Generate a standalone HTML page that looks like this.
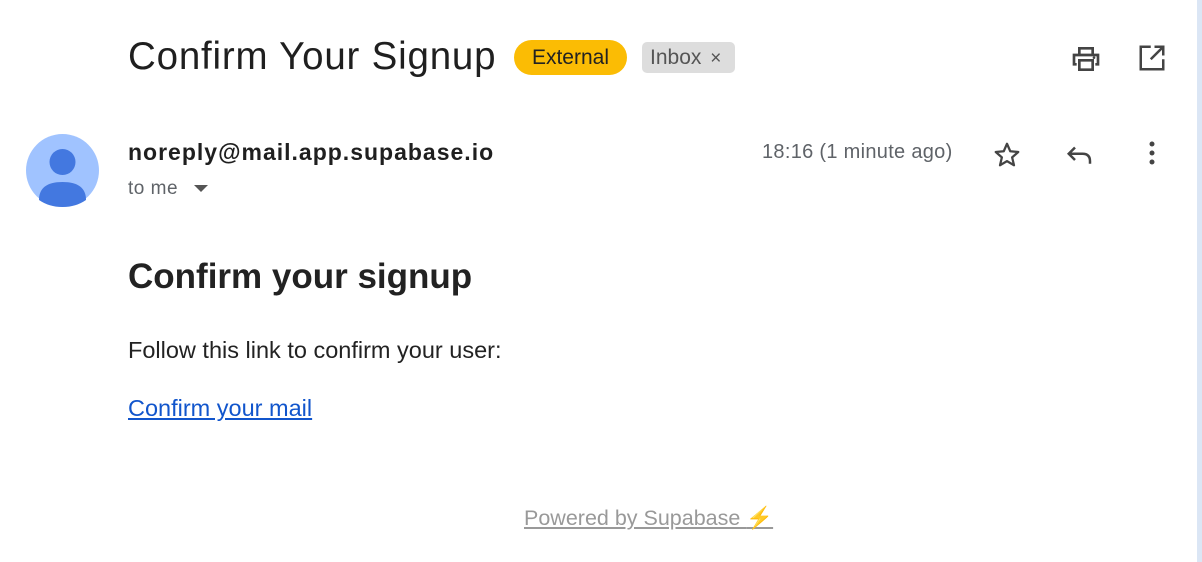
<!DOCTYPE html>
<html><head><meta charset="utf-8"><style>
body{margin:0;width:1202px;height:562px;background:#fff;font-family:"Liberation Sans",Arial,sans-serif;position:relative;overflow:hidden}
.a{position:absolute;white-space:nowrap}
</style></head><body>
<div class="a" style="left:1197px;top:0;width:5px;height:562px;background:#dbe6f5"></div>
<div class="a" style="left:128px;top:35px;font-size:38.5px;color:#1f1f1f;letter-spacing:0.8px">Confirm Your Signup</div>
<div class="a" style="left:514px;top:40px;width:113px;height:35px;border-radius:18px;background:#fbbc04;font-size:21px;color:#222;line-height:35px;text-align:center">External</div>
<div class="a" style="left:642px;top:42px;width:93px;height:31px;border-radius:5px;background:#dddddd;font-size:21px;color:#555;line-height:31px;padding-left:8px;box-sizing:border-box">Inbox <span style="font-size:19px;margin-left:3px">×</span></div>
<svg class="a" style="left:1070px;top:43px" width="32" height="32" viewBox="0 0 24 24"><path d="M7 8V4h10v4M5 16H3V9h18v7h-2M7 13h10v7H7z" fill="none" stroke="#444" stroke-width="2"/><circle cx="18" cy="11" r="1" fill="#444"/></svg>
<svg class="a" style="left:1137px;top:43px" width="30" height="30" viewBox="0 0 24 24"><path d="M11 3H3v18h18v-8M14 3h7v7M21 3L11 13" fill="none" stroke="#444" stroke-width="2"/></svg>
<svg class="a" style="left:26px;top:134px" width="73" height="73" viewBox="0 0 73 73"><circle cx="36.5" cy="36.5" r="36.5" fill="#a0c3ff"/><circle cx="36.5" cy="28" r="13" fill="#4378e0"/><path d="M13 66 Q13 48 36.5 48 Q60 48 60 66 Q50 73 36.5 73 Q23 73 13 66Z" fill="#4378e0"/></svg>
<div class="a" style="left:128px;top:139px;font-size:23px;font-weight:bold;color:#1f1f1f;letter-spacing:1px">noreply@mail.app.supabase.io</div>
<div class="a" style="left:128px;top:178px;font-size:19px;color:#5f6368;letter-spacing:0.5px">to me</div>
<svg class="a" style="left:193px;top:184px" width="16" height="10"><path d="M1 1h14L8 8z" fill="#555"/></svg>
<div class="a" style="left:762px;top:141px;font-size:20px;color:#5f6368;letter-spacing:0.3px">18:16 (1 minute ago)</div>
<svg class="a" style="left:992px;top:140px" width="30" height="30" viewBox="0 0 24 24"><path d="M12 3l2.6 6 6.4.6-4.9 4.3 1.5 6.3L12 16.9 6.4 20.2l1.5-6.3L3 9.6 9.4 9z" fill="none" stroke="#444" stroke-width="1.8" stroke-linejoin="round"/></svg>
<svg class="a" style="left:1065px;top:140px" width="30" height="30" viewBox="0 0 24 24"><path d="M8 6l-5 5 5 5M3 11h11q6 0 6 6v2" fill="none" stroke="#444" stroke-width="2"/></svg>
<svg class="a" style="left:1144px;top:140px" width="16" height="26"><circle cx="8" cy="4" r="2.5" fill="#444"/><circle cx="8" cy="13" r="2.5" fill="#444"/><circle cx="8" cy="22" r="2.5" fill="#444"/></svg>
<div class="a" style="left:128px;top:257px;font-size:35px;font-weight:bold;color:#222">Confirm your signup</div>
<div class="a" style="left:128px;top:337px;font-size:23.5px;color:#222">Follow this link to confirm your user:</div>
<div class="a" style="left:128px;top:395px;font-size:23.5px;color:#1155cc;text-decoration:underline">Confirm your mail</div>
<div class="a" style="left:524px;top:506px;font-size:21.5px;color:#999;text-decoration:underline">Powered by Supabase <span style="color:#f5b400">⚡</span></div>
</body></html>
